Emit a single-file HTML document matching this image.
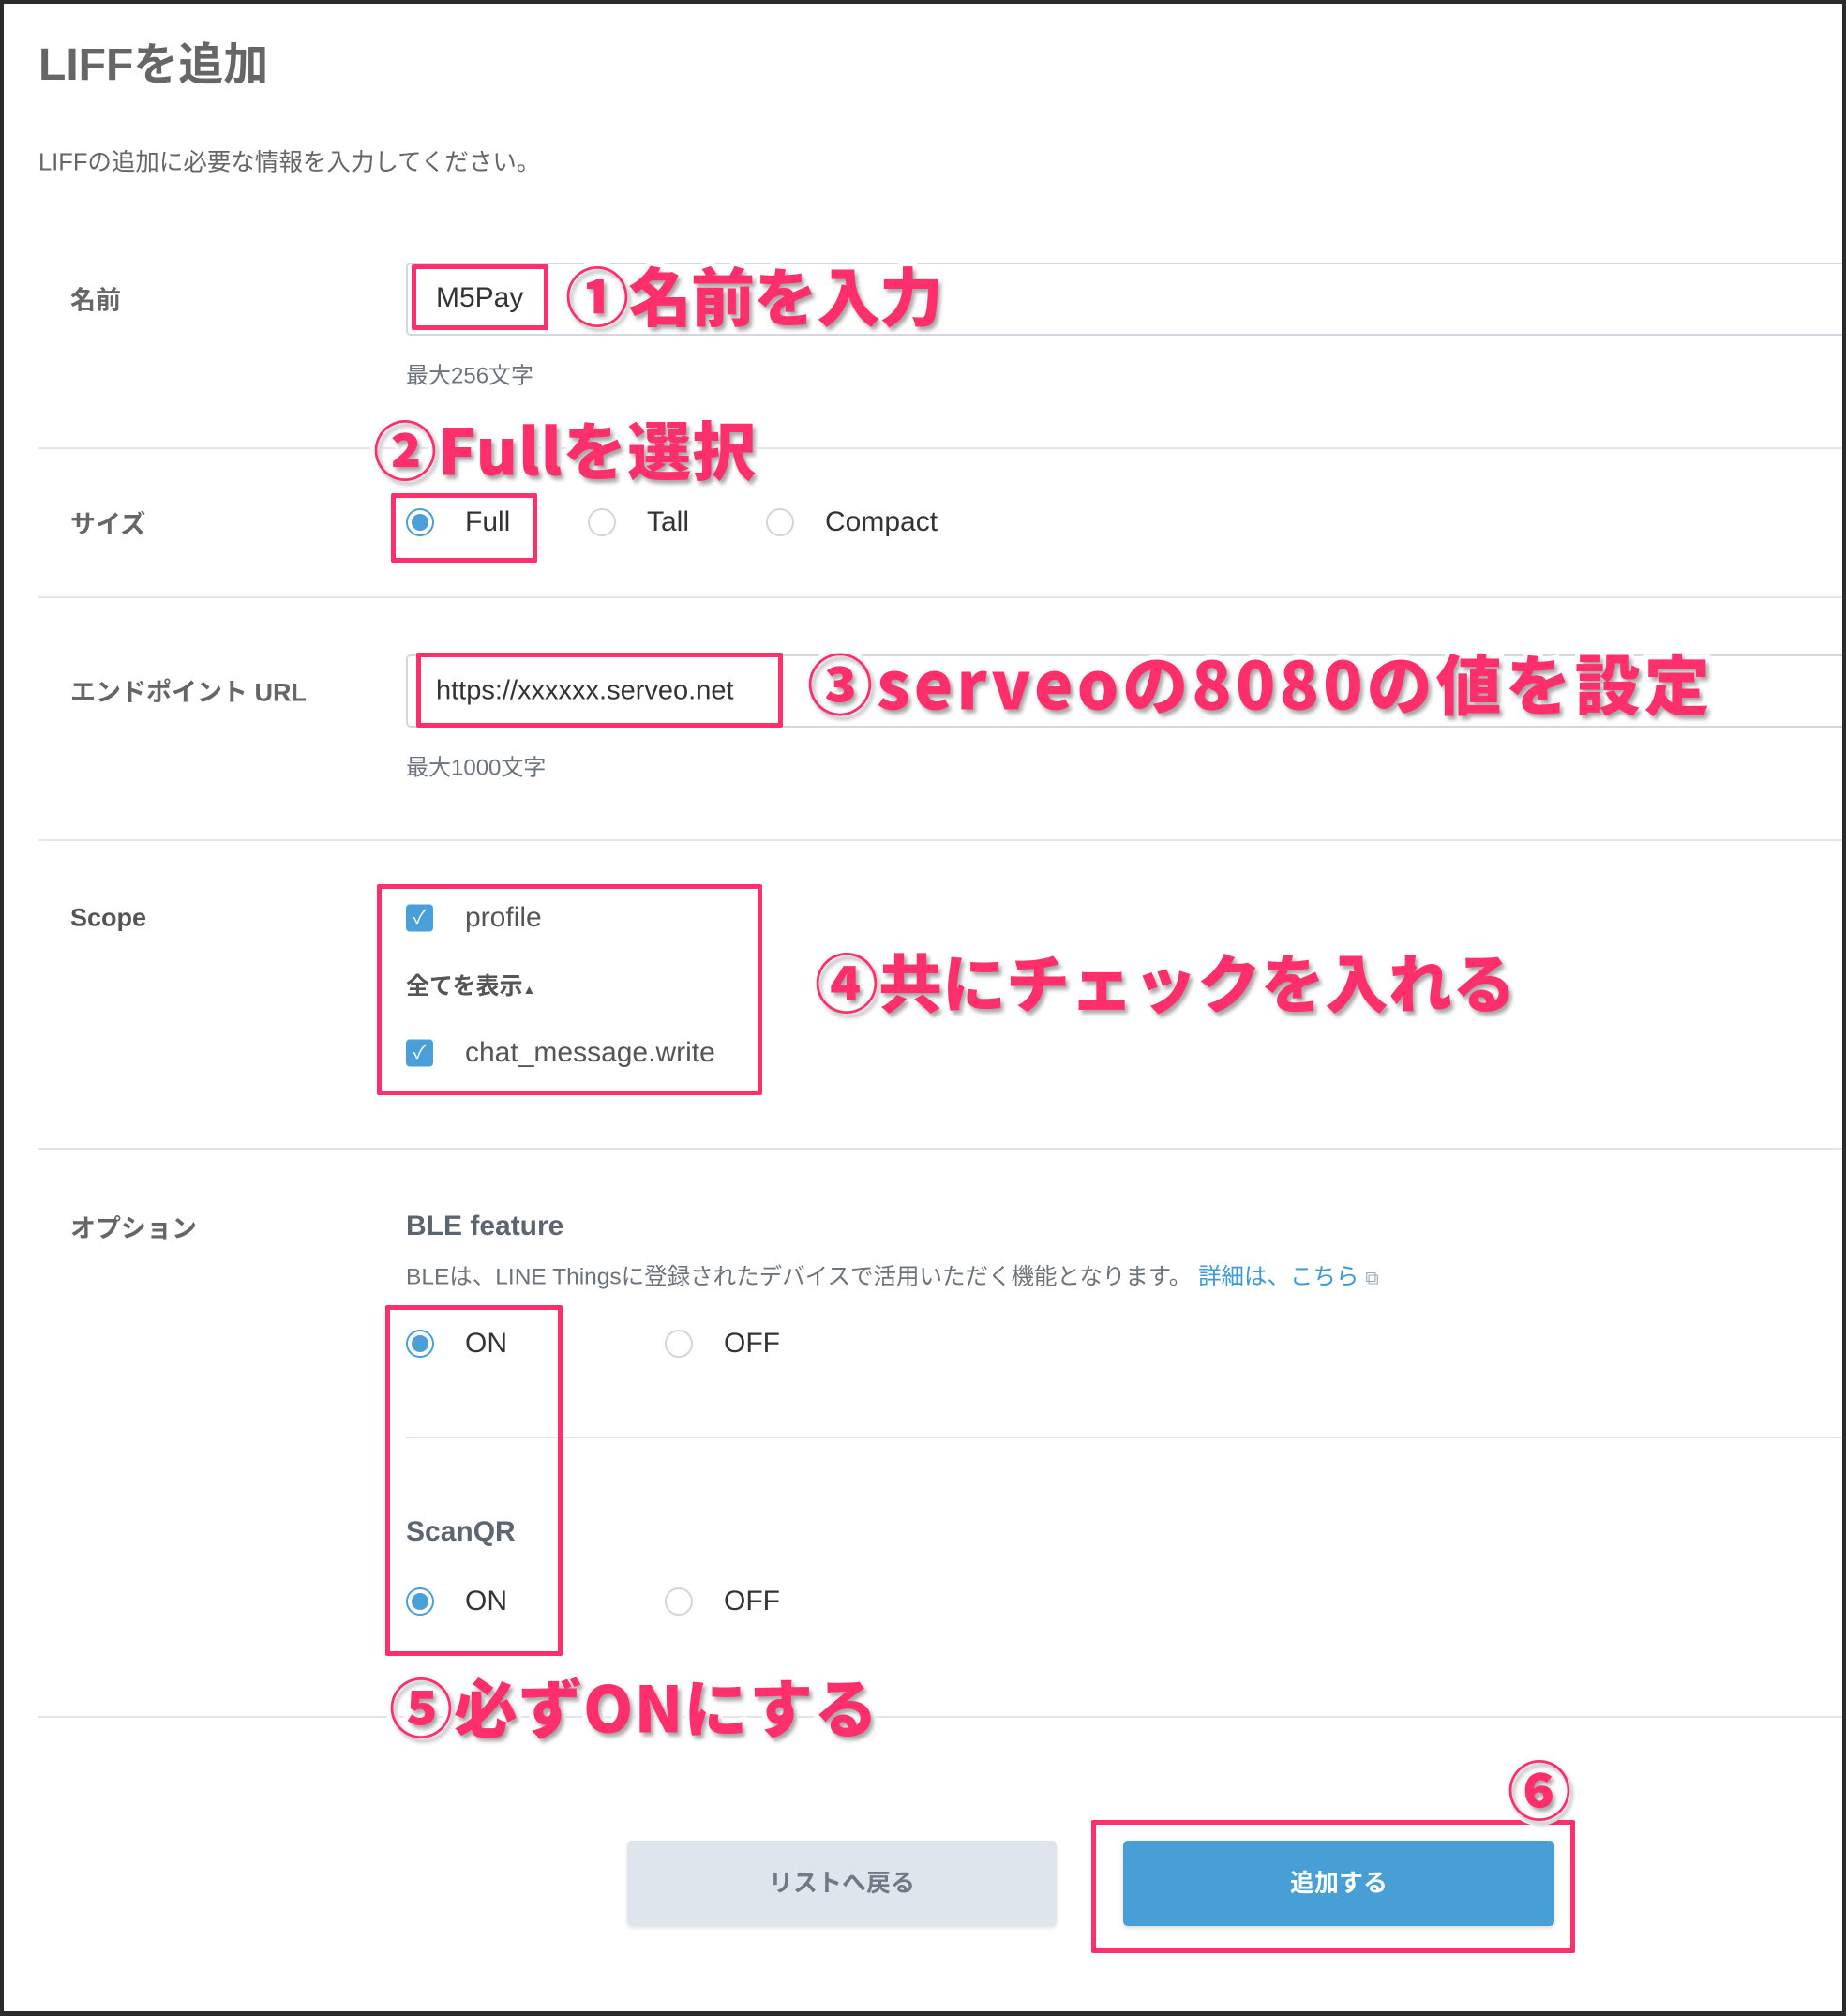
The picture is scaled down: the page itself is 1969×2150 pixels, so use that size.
<!DOCTYPE html>
<html><head><meta charset="utf-8"><style>
*{margin:0;padding:0;box-sizing:border-box}
body{width:1969px;height:2150px;background:#fff;position:relative;overflow:hidden;font-family:"Liberation Sans","Noto Sans CJK JP",sans-serif;color:#555}
.a{position:absolute;white-space:nowrap}
.frame{position:absolute;left:0;top:0;width:1969px;height:2150px;border:4px solid #2b2b2b;border-bottom-width:5px}
.lbl{font-size:27px;font-weight:bold;color:#666;transform:translateY(-50%)}
.hr{position:absolute;height:2px;background:#e1e6ec;right:4px}
.inp{position:absolute;left:433px;right:4px;border:2px solid #d3d8de;border-right:none;border-radius:5px 0 0 5px;background:#fff}
.red{position:absolute;border:5px solid #ff2f6c;border-radius:2px}
.txt{font-size:30px;color:#333;transform:translateY(-50%)}
.small{font-size:24px;color:#6c737b;transform:translateY(-50%)}
.radio{position:absolute;width:30px;height:30px;border-radius:50%;border:2px solid #cfd6dc;background:#fff;transform:translateY(-50%)}
.radio.on{border-color:#4a9fd8}
.radio.on::after{content:"";position:absolute;left:4px;top:4px;width:18px;height:18px;border-radius:50%;background:#4a9fd8}
.cb{position:absolute;width:29px;height:29px;border-radius:4px;background:#4a9fd8;transform:translateY(-50%);color:#fff;font-size:20px;text-align:center;line-height:29px}
.ann{font-family:"Noto Sans CJK JP","Liberation Sans",sans-serif;font-weight:900;font-size:68px;color:#ff2f6c;-webkit-text-stroke:10px #fff;paint-order:stroke fill;text-shadow:3px 4px 4px rgba(0,0,0,.35);transform:translateY(-50%);letter-spacing:-1px}
</style></head><body>
<div class="a" style="left:41px;top:64px;font-size:48px;font-weight:bold;color:#666;transform:translateY(-50%)">LIFFを追加</div>
<div class="a" style="left:41px;top:171px;font-size:25.5px;color:#666;transform:translateY(-50%)">LIFFの追加に必要な情報を入力してください。</div>

<div class="a lbl" style="left:75px;top:318px">名前</div>
<div class="inp" style="top:280px;height:78px"></div>
<div class="red" style="left:439px;top:282px;width:146px;height:70px"></div>
<div class="a txt" style="left:465px;top:318px">M5Pay</div>
<div class="a ann" style="left:603px;top:313px">①名前を入力</div>
<div class="a small" style="left:433px;top:398px">最大256文字</div>

<div class="hr" style="left:41px;top:477px"></div>
<div class="a ann" style="left:398px;top:477px;letter-spacing:1px">②Fullを選択</div>

<div class="a lbl" style="left:75px;top:557px">サイズ</div>
<div class="radio on" style="left:433px;top:557px"></div><div class="a txt" style="left:496px;top:557px">Full</div>
<div class="radio" style="left:627px;top:557px"></div><div class="a txt" style="left:690px;top:557px">Tall</div>
<div class="radio" style="left:817px;top:557px"></div><div class="a txt" style="left:880px;top:557px">Compact</div>
<div class="red" style="left:417px;top:526px;width:156px;height:74px"></div>

<div class="hr" style="left:41px;top:636px"></div>

<div class="a lbl" style="left:75px;top:736px">エンドポイント URL</div>
<div class="inp" style="top:698px;height:78px"></div>
<div class="red" style="left:444px;top:696px;width:391px;height:80px"></div>
<div class="a txt" style="left:465px;top:737px;font-size:29px">https://xxxxxx.serveo.net</div>
<div class="a ann" style="left:861px;top:727px;font-size:70px;letter-spacing:4px">③serveoの8080の値を設定</div>
<div class="a small" style="left:433px;top:816px">最大1000文字</div>

<div class="hr" style="left:41px;top:895px"></div>

<div class="a lbl" style="left:75px;top:979px;color:#555">Scope</div>
<div class="cb" style="left:433px;top:979px">✓</div><div class="a txt" style="left:496px;top:979px;color:#555">profile</div>
<div class="a" style="left:433px;top:1050px;font-size:25px;font-weight:bold;color:#555;transform:translateY(-50%)">全てを表示<span style="font-size:14px">▲</span></div>
<div class="cb" style="left:433px;top:1123px">✓</div><div class="a txt" style="left:496px;top:1123px;color:#555">chat_message.write</div>
<div class="red" style="left:402px;top:943px;width:411px;height:225px"></div>
<div class="a ann" style="left:869px;top:1045px;letter-spacing:0px">④共にチェックを入れる</div>

<div class="hr" style="left:41px;top:1224px"></div>

<div class="a lbl" style="left:75px;top:1308px">オプション</div>
<div class="a" style="left:433px;top:1308px;font-size:30px;font-weight:bold;color:#5d6670;transform:translateY(-50%)">BLE feature</div>
<div class="a small" style="left:433px;top:1360px;font-size:24.5px">BLEは、LINE Thingsに登録されたデバイスで活用いただく機能となります。 <span style="color:#3d9ad8">詳細は、こちら <span style="font-size:20px;color:#9ab">⧉</span></span></div>
<div class="radio on" style="left:433px;top:1433px"></div><div class="a txt" style="left:496px;top:1433px">ON</div>
<div class="radio" style="left:709px;top:1433px"></div><div class="a txt" style="left:772px;top:1433px">OFF</div>
<div class="hr" style="left:433px;top:1532px"></div>
<div class="a" style="left:433px;top:1634px;font-size:30px;font-weight:bold;color:#5d6670;transform:translateY(-50%)">ScanQR</div>
<div class="radio on" style="left:433px;top:1708px"></div><div class="a txt" style="left:496px;top:1708px">ON</div>
<div class="radio" style="left:709px;top:1708px"></div><div class="a txt" style="left:772px;top:1708px">OFF</div>
<div class="red" style="left:411px;top:1392px;width:189px;height:374px"></div>

<div class="hr" style="left:41px;top:1830px"></div>
<div class="a ann" style="left:415px;top:1818px;letter-spacing:1px">⑤必ずONにする</div>

<div class="a" style="left:669px;top:1963px;width:458px;height:91px;background:#dfe5ec;border-radius:5px;box-shadow:0 2px 4px rgba(0,0,0,.12);font-size:26px;font-weight:bold;color:#6f7a86;text-align:center;line-height:91px">リストへ戻る</div>
<div class="a" style="left:1198px;top:1963px;width:460px;height:91px;background:#479fd6;border-radius:5px;box-shadow:0 2px 4px rgba(0,0,0,.15);font-size:26px;font-weight:bold;color:#fff;text-align:center;line-height:91px">追加する</div>
<div class="red" style="left:1164px;top:1941px;width:516px;height:142px"></div>
<div class="a ann" style="left:1608px;top:1906px">⑥</div>

<div class="frame"></div>
</body></html>
